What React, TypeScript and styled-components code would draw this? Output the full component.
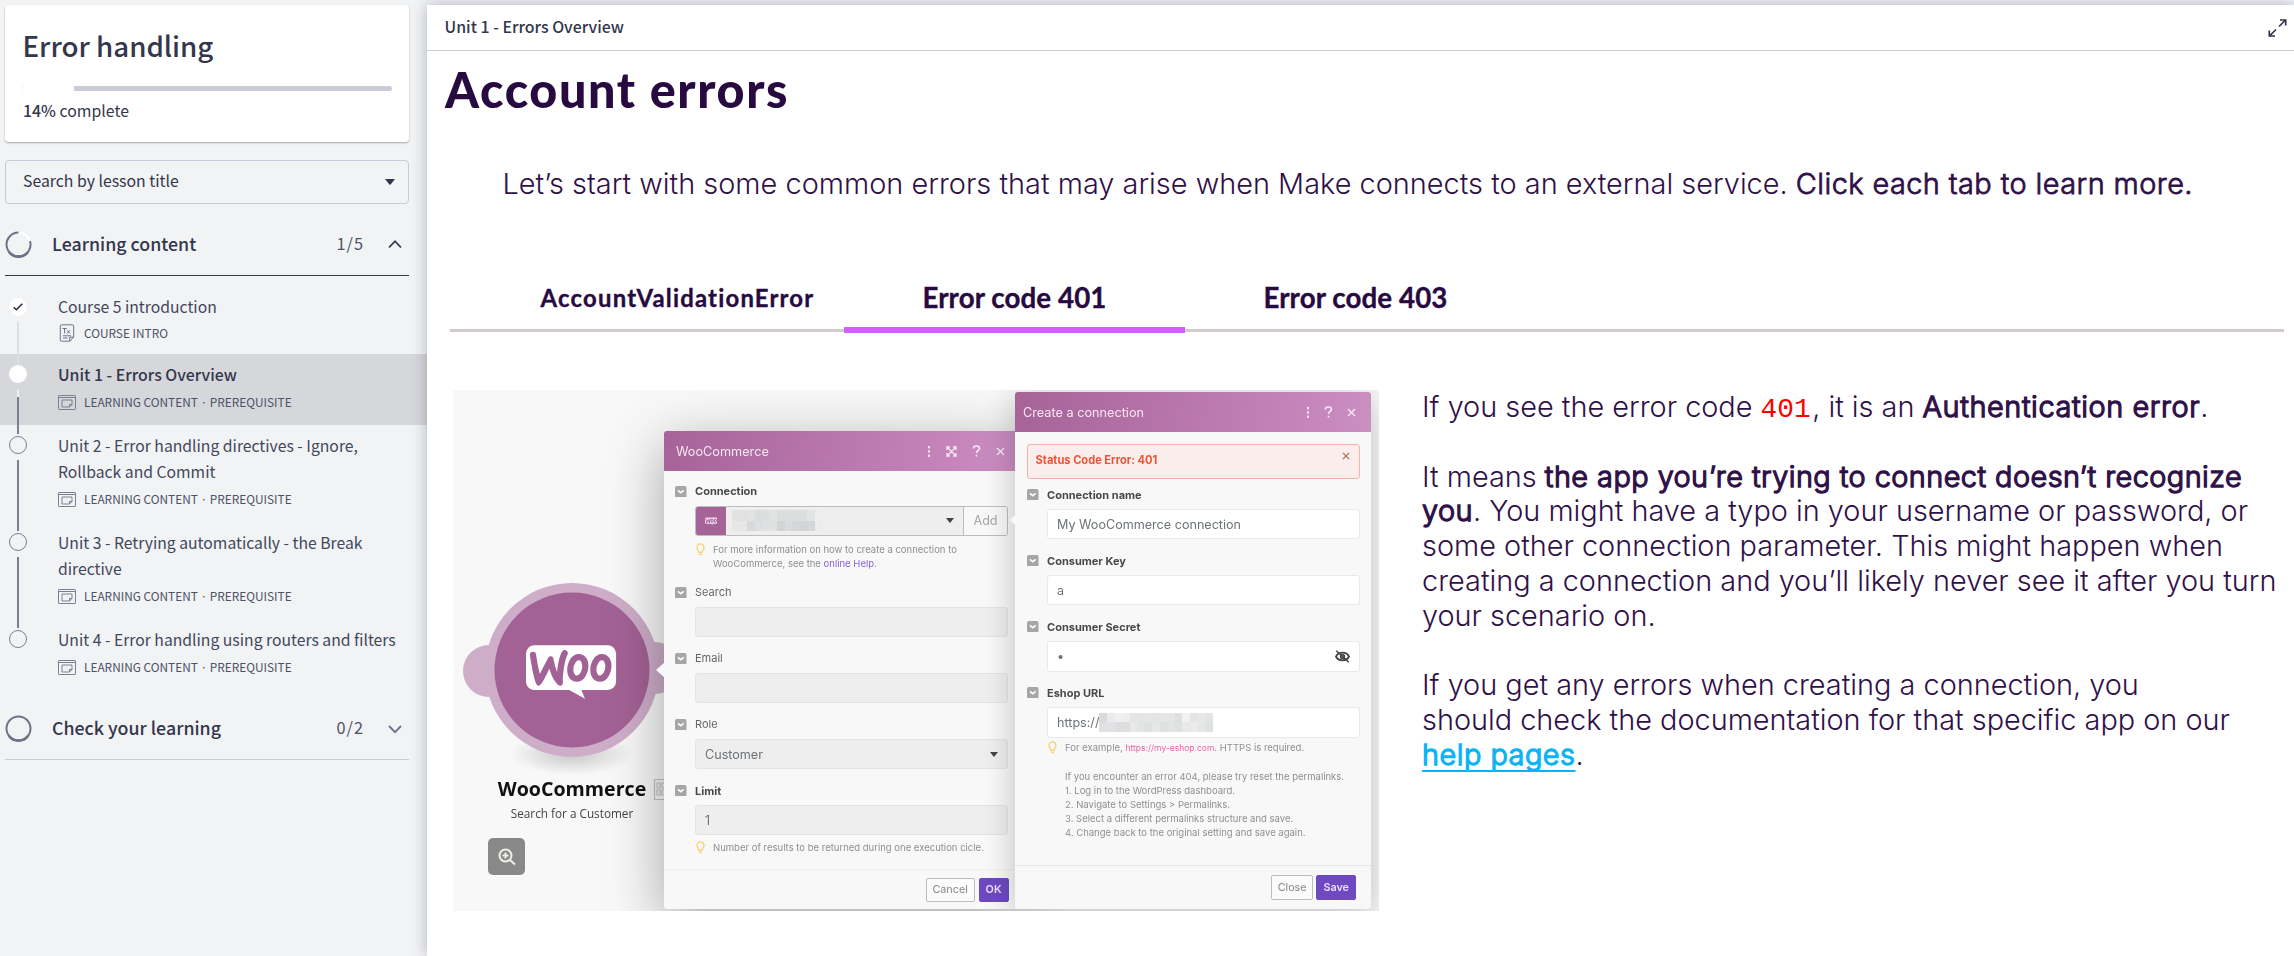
import React from 'react';
import styled, { createGlobalStyle, css } from 'styled-components';
import { SiWoocommerce } from 'react-icons/si';

const uiFont = '"Noto Sans CJK JP", "Noto Sans", sans-serif';
const bodyFont = 'Inter, "Liberation Sans", sans-serif';
const headFont = 'Lato, "Liberation Sans", sans-serif';

const GlobalStyle = createGlobalStyle`
  *, *::before, *::after { box-sizing: border-box; }
  body { margin: 0; background: #f1f3f5; overflow: hidden; }
`;

/* ---------- page ---------- */

const Page = styled.div`
  display: flex;
  width: 2294px;
  height: 956px;
  overflow: hidden;
  font-family: ${uiFont};
  color: #33364c;
`;

const Sidebar = styled.aside`
  width: 427px;
  flex: none;
  padding-top: 5px;
  background: #f1f3f5;
`;

const Main = styled.main`
  flex: 1;
  margin-top: 5px;
  background: #fff;
  box-shadow: 0 0 14px rgba(40, 44, 60, 0.32);
  z-index: 1;
`;

/* ---------- sidebar ---------- */

const ProgressCard = styled.section`
  width: 404px;
  height: 137px;
  margin-left: 5px;
  padding: 22px 17px 0;
  border-radius: 4px;
  background: #fff;
  box-shadow: 0 1px 2px rgba(0, 0, 0, 0.32);
`;

const CourseTitle = styled.h1`
  margin: 0 0 23px 0.5px;
  font-size: 27.7px;
  line-height: 36px;
  font-weight: 500;
`;

const ProgressTrack = styled.div`
  height: 5px;
  border-radius: 3px;
  overflow: hidden;
  background: #c9cbd7;
`;

const ProgressFill = styled.div`
  width: 14%;
  height: 5px;
  background: #fff;
`;

const ProgressText = styled.p`
  margin: 8px 0 0 1px;
  font-size: 15.85px;
  line-height: 24px;

  b {
    font-weight: 500;
  }
`;

const SearchSelect = styled.div`
  display: flex;
  align-items: center;
  justify-content: space-between;
  width: 404px;
  height: 44px;
  margin: 18px 0 0 5px;
  padding: 0 13px 0 17px;
  border: 1px solid #c9cbda;
  border-radius: 4px;
  font-size: 15.8px;
  line-height: 24px;

  span {
    margin-bottom: 3px;
  }
`;

const SectionHeader = styled.div<{ $open?: boolean }>`
  display: flex;
  align-items: center;
  width: 404px;
  height: ${p => (p.$open ? 72 : 70)}px;
  margin-left: 5px;
  padding: ${p => (p.$open ? '10px' : '8px')} 5px 0 0;
  border-bottom: 1px solid ${p => (p.$open ? '#33364c' : '#cbccd2')};

  > svg {
    flex: none;
  }
`;

const SectionTitle = styled.h2`
  flex: 1;
  margin: 0 0 3px 20px;
  font-size: 17.8px;
  line-height: 26px;
  font-weight: 500;
`;

const SectionCount = styled.span`
  margin: 0 22px 3px 0;
  font-size: 16.3px;
  line-height: 26px;
  letter-spacing: 1px;
  color: #4f5266;
`;

const LessonList = styled.ul`
  margin: 10px 0 0;
  padding: 0;
  list-style: none;
`;

const Lesson = styled.li<{ $selected?: boolean }>`
  display: flex;
  padding-left: 8px;
  background: ${p => (p.$selected ? '#d6d7db' : 'transparent')};
`;

const Rail = styled.div<{ $first?: boolean }>`
  position: relative;
  z-index: 1;
  display: flex;
  flex-direction: column;
  align-items: center;
  gap: 6px;
  width: 20px;
  margin-right: 30px;
  padding-top: ${p => (p.$first ? 12 : 11)}px;
`;

const Dot = styled.span<{ $state: 'done' | 'current' | 'todo' }>`
  display: grid;
  place-items: center;
  flex: none;
  width: 18px;
  height: 18px;
  border-radius: 50%;
  ${p =>
    p.$state === 'todo'
      ? css`
          border: 1px solid #7c7f92;
        `
      : css`
          background: #fff;
        `}
`;

const Line = styled.span<{ $state: 'done' | 'current' | 'todo' }>`
  flex: 1;
  width: 1.5px;
  margin-bottom: -9px;
  background: ${p =>
    p.$state === 'done'
      ? '#dedfe3'
      : p.$state === 'current'
        ? 'linear-gradient(#eeeff1 8px, #7c7f92 8px)'
        : '#7c7f92'};
`;

const LessonBody = styled.div<{ $first?: boolean }>`
  padding: ${p => (p.$first ? '8px 0 11.5px' : '8px 0 13px')};
`;

const LessonTitle = styled.div<{ $selected?: boolean }>`
  font-size: ${p => (p.$selected ? 15.85 : 15.73)}px;
  line-height: 26px;
  font-weight: ${p => (p.$selected ? 500 : 400)};
  color: ${p => (p.$selected ? '#33364c' : '#44475b')};
  white-space: nowrap;
`;

const LessonMeta = styled.div<{ $first?: boolean }>`
  display: flex;
  align-items: center;
  height: 20px;
  margin-top: ${p => (p.$first ? 2.5 : 4)}px;
  font-size: 11.85px;
  line-height: 20px;
  color: #4f5266;
  white-space: nowrap;
`;

const MetaIcon = styled.span`
  display: flex;
  justify-content: center;
  width: 18px;
  margin-right: 8px;
`;

/* ---------- lesson header ---------- */

const TopBar = styled.header`
  display: flex;
  align-items: center;
  justify-content: space-between;
  height: 46px;
  padding: 0 7px 0 17.5px;
  border-bottom: 1px solid #c9cbd7;
  font-size: 15.9px;
  line-height: 24px;
  font-weight: 500;

  span {
    margin-bottom: 2px;
  }
`;

const Heading = styled.h2`
  margin: 8px 0 0 18px;
  font-family: ${headFont};
  font-size: 48.5px;
  line-height: 60px;
  font-weight: 900;
  letter-spacing: 1.6px;
  color: #270a40;
`;

const Intro = styled.p`
  margin: 47px 0 0 75.5px;
  font-family: ${bodyFont};
  font-size: 28.92px;
  line-height: 35px;
  font-weight: 300;
  color: #2f1148;
  white-space: nowrap;
`;

const Strong = styled.span<{ $soft?: boolean; $wide?: boolean }>`
  letter-spacing: ${p => (p.$soft ? 0.42 : p.$wide ? 0.6 : 0.45)}px;
  -webkit-text-stroke: ${p => (p.$soft ? 0.8 : 1.3)}px currentColor;
`;

/* ---------- tabs ---------- */

const Tabs = styled.nav`
  display: flex;
  height: 63px;
  margin: 69px 10px 0 23px;
  padding-left: 53px;
  background: linear-gradient(#d3cccd, #d3cccd) 0 59px / 100% 3px no-repeat;
`;

const Tab = styled.div<{ $active?: boolean; $small?: boolean }>`
  width: 341px;
  height: 63px;
  padding: 10px 0 0 ${p => (p.$small ? 8 : 0)}px;
  border-bottom: 6px solid ${p => (p.$active ? '#d35ff7' : 'transparent')};
  font-family: ${headFont};
  font-size: ${p => (p.$small ? 23.9 : 27.7)}px;
  letter-spacing: ${p => (p.$small ? 1.2 : 0.1)}px;
  line-height: 36px;
  font-weight: 700;
  -webkit-text-stroke: 0.35px currentColor;
  text-align: center;
  color: #270a40;
`;

/* ---------- lesson body ---------- */

const Columns = styled.div`
  display: flex;
  padding: 57px 0 0 26px;
`;

const Copy = styled.div`
  margin-left: 43px;
  font-family: ${bodyFont};
  font-size: 28.87px;
  line-height: 34.77px;
  font-weight: 300;
  color: #2f1148;
  white-space: nowrap;

  p {
    margin: 0 0 34.77px;
  }
`;

const Code = styled.code`
  margin-right: 1.5px;
  font: 27.8px/1 'Liberation Mono', monospace;
  color: #f00;
`;

const HelpLink = styled.a`
  color: #0bb4f4;
  letter-spacing: 0.5px;
  -webkit-text-stroke: 1.3px currentColor;
  text-decoration: underline;
  text-decoration-thickness: 2px;
  text-underline-offset: 5px;
  text-decoration-skip-ink: none;
`;

/* ---------- illustration ---------- */

const Canvas = styled.figure`
  position: relative;
  width: 926px;
  height: 521px;
  margin: 0;
  overflow: hidden;
  background: #f8f8f8;
  font-family: ${bodyFont};
  filter: blur(0.6px);
`;

const NodeArt = styled.svg`
  position: absolute;
  left: 0;
  top: 180px;
`;

const NodeLogo = styled(SiWoocommerce)`
  position: absolute;
  left: 73px;
  top: 253px;
  width: 92px;
  height: 58px;
  color: #fff;
`;

const NodeCaption = styled.figcaption`
  position: absolute;
  left: 19px;
  top: 385px;
  width: 200px;
  font-family: 'Open Sans', 'Noto Sans', sans-serif;
  font-size: 11.75px;
  line-height: 20px;
  text-align: center;
  color: #444;

  b {
    display: block;
    font-size: 19.6px;
    line-height: 28px;
    color: #111;
  }
`;

const ZoomButton = styled.button`
  position: absolute;
  left: 35px;
  top: 448px;
  display: grid;
  place-items: center;
  width: 37px;
  height: 37px;
  padding: 0;
  border: 0;
  border-radius: 5px;
  background: #898989;
`;

const Dialog = styled.div<{ $second?: boolean }>`
  position: absolute;
  display: flex;
  flex-direction: column;
  left: ${p => (p.$second ? 562 : 211)}px;
  top: ${p => (p.$second ? 2 : 41)}px;
  width: 356px;
  height: ${p => (p.$second ? 516.5 : 477.5)}px;
  border-radius: 3px;
  background: #f8f8f8;
  box-shadow: ${p => (p.$second ? '0 6px 32px rgba(0,0,0,.24)' : '0 14px 56px rgba(0,0,0,.34)')};
`;

const Pointer = styled.svg<{ $second?: boolean }>`
  position: absolute;
  left: ${p => (p.$second ? 557 : 203)}px;
  top: ${p => (p.$second ? 124 : 272)}px;
`;

const DialogHead = styled.div`
  display: flex;
  align-items: center;
  height: 40px;
  flex: none;
  padding: 0 15px 0 12px;
  border-radius: 3px 3px 0 0;
  background: linear-gradient(100deg, #a56398, #c382b8 75%, #cb8fc2);
  font-size: 12.7px;
  color: #f7e6f4;
`;

const ConnectionHead = styled(DialogHead)`
  padding-left: 8px;
`;

const HeadIcons = styled.div<{ $gap: number }>`
  display: flex;
  align-items: center;
  gap: ${p => p.$gap}px;
  margin-left: auto;
`;

const DialogBody = styled.div<{ $second?: boolean }>`
  flex: 1;
  padding: ${p => (p.$second ? '12px 11px 0 12px' : '12.3px 12px 0 11px')};
`;

const DialogFoot = styled.div<{ $second?: boolean }>`
  display: flex;
  justify-content: flex-end;
  gap: ${p => (p.$second ? 3 : 4)}px;
  height: ${p => (p.$second ? 43.5 : 39.5)}px;
  padding: ${p => (p.$second ? '9px 15px 0 0' : '7.5px 11.5px 0 0')};
  border-top: 1px solid ${p => (p.$second ? '#e6e6e6' : '#f0f0f0')};
`;

const Button = styled.button<{ $primary?: boolean }>`
  height: 24.5px;
  padding: 0 ${p => (p.$primary ? 6 : 5.8)}px;
  border: 1px solid ${p => (p.$primary ? '#6e49bf' : '#b9bec4')};
  border-radius: 2px;
  background: ${p => (p.$primary ? '#6e49bf' : '#fbfbfb')};
  font-family: ${bodyFont};
  font-size: 10.8px;
  font-weight: ${p => (p.$primary ? 600 : 400)};
  color: ${p => (p.$primary ? '#e9e0fb' : '#84898f')};
`;

const Alert = styled.div`
  display: flex;
  justify-content: space-between;
  height: 34.5px;
  margin-bottom: 8px;
  padding: 7px 9px 0 7.5px;
  border: 1px solid #f3b3a8;
  border-radius: 3px;
  background: #f9eeec;
  font-size: 11.1px;
  line-height: 16px;
  font-weight: 700;
  color: #ee5237;
`;

const Field = styled.div`
  margin-bottom: 13.2px;
`;

const Label = styled.div<{ $bold?: boolean }>`
  display: flex;
  align-items: center;
  gap: 8.5px;
  height: 16px;
  margin-bottom: 6.3px;
  font-size: 11px;
  line-height: 16px;
  font-weight: ${p => (p.$bold ? 700 : 400)};
  color: ${p => (p.$bold ? '#484848' : '#666')};
`;

const Input = styled.div<{ $white?: boolean }>`
  display: flex;
  align-items: center;
  height: 30.6px;
  margin-left: 20px;
  padding: 0 9px;
  border: 1px solid ${p => (p.$white ? '#e9e9e9' : '#e4e4e4')};
  border-radius: 3px;
  background: ${p => (p.$white ? '#fff' : '#eee')};
  font-size: 12.6px;
  color: #6d7276;

  > svg {
    margin-left: auto;
  }
`;

const Connection = styled(Input)`
  padding: 0;
  border-color: #b9bec0;
  overflow: hidden;
`;

const WooBadge = styled.span`
  display: grid;
  place-items: center;
  width: 30px;
  height: 30px;
  background: #a56398;
  color: #f0dcec;
`;

const SelectPart = styled.span`
  display: flex;
  align-items: center;
  justify-content: space-between;
  flex: 1;
  padding: 0 9px 0 6px;
`;

const AddPart = styled.span`
  display: grid;
  place-items: center;
  width: 44px;
  height: 30px;
  border-left: 1px solid #b9bec0;
  background: #f8f8f8;
  color: #a3a7aa;
`;

const Hint = styled.div<{ $gap: number }>`
  display: flex;
  gap: 8px;
  margin: ${p => p.$gap}px 0 0 21px;
  font-size: 9.5px;
  line-height: 14.2px;
  color: #8f8f8f;
  white-space: nowrap;

  svg {
    flex: none;
  }
`;

const HintLink = styled.span<{ $pink?: boolean }>`
  color: ${p => (p.$pink ? '#ee5fa8' : '#8763d6')};
  font-size: ${p => (p.$pink ? 8.5 : 9.5)}px;
`;

const Mosaic = styled.span<{ $cols: number; $h: number }>`
  display: grid;
  grid-template-columns: repeat(${p => p.$cols}, 7.55px);
  grid-auto-rows: ${p => p.$h}px;
`;

const Cell = styled.i<{ $c: string }>`
  background: #${p => p.$c};
`;

/* ---------- icons ---------- */

const Ring = ({ partial }: { partial?: boolean }) => (
  <svg width="27" height="27" viewBox="0 0 27 27" fill="none">
    <circle cx="13.5" cy="13.5" r="12" stroke={partial ? '#fff' : '#6f7286'} strokeWidth="2" />
    {partial && <path d="M13.5 1.5A12 12 0 1 0 25 10" stroke="#6f7286" strokeWidth="2" />}
    <path d="M4 21A12 12 0 0 0 23 21" stroke="#6f7286" strokeWidth="2.6" />
  </svg>
);

const Chevron = ({ up }: { up?: boolean }) => (
  <svg width="18" height="18" viewBox="0 0 18 18" fill="none" stroke={up ? '#33364c' : '#6f7286'} strokeWidth="1.8">
    <path d={up ? 'M3 11.5 9 5.2l6 6.3' : 'M3 6l6 6.2L15 6'} />
  </svg>
);

const Caret = ({ w = 10, h = 6, color = '#33364c' }) => (
  <svg width={w} height={h} viewBox="0 0 10 6">
    <path d="M0 0h10L5.6 5.6a.9.9 0 0 1-1.2 0z" fill={color} />
  </svg>
);

const DocIcon = () => (
  <svg width="16" height="18" viewBox="0 0 16 18" fill="none" stroke="#6f7286" strokeWidth="1">
    <path d="M2.5.8h11a1.2 1.2 0 0 1 1.2 1.2v11l-4 4.2H2.5A1.2 1.2 0 0 1 1.3 16V2A1.2 1.2 0 0 1 2.5.8z" />
    <path d="M10.7 17v-3.800h4M3.500 4.500h4.200M5.600 4.500v5M8 6.200l3 3.300M11 6.200 8 9.500M4 11.800h8M4 14h4.500" />
  </svg>
);

const WindowIcon = () => (
  <svg width="18" height="15" viewBox="0 0 18 15" fill="none" stroke="#7c7f92" strokeWidth="1">
    <rect x=".5" y=".5" width="17" height="14" rx=".6" />
    <path d="M.5 2.500h17M14 9.500V5H4v7h7.500M11.500 12V9.500H14z" />
  </svg>
);

const ExpandIcon = () => (
  <svg width="19" height="18" viewBox="0 0 19 18" fill="none" stroke="#33364c" strokeWidth="1.7">
    <path d="M11 7.500 17 1.500M12 1h5.700v5.600M8 10.500 2 16.500M7 17H1.300v-5.600" />
  </svg>
);

const Marker = () => (
  <svg width="11.5" height="11.5" viewBox="0 0 12 12">
    <rect width="12" height="12" rx="1.8" fill="#a6a6a6" />
    <path d="M3 4.500 6 7l3-2.500" fill="none" stroke="#fff" strokeWidth="1.6" />
  </svg>
);

const Bulb = () => (
  <svg width="9" height="13" viewBox="0 0 9 13" fill="none" stroke="#fbcf6b" strokeWidth="1.300">
    <path d="M3 9.500C3 7.500 1 6.800 1 4.400a3.500 3.500 0 0 1 7 0C8 6.800 6 7.500 6 9.500zM3.200 11.700h2.600" />
  </svg>
);

const MoreDots = () => (
  <svg width="4" height="11" viewBox="0 0 4 11" fill="#f7e6f4">
    <rect x="1" y="0" width="2" height="2.300" />
    <rect x="1" y="4.300" width="2" height="2.300" />
    <rect x="1" y="8.600" width="2" height="2.300" />
  </svg>
);

const Arrows = () => (
  <svg width="11" height="11" viewBox="0 0 11 11" fill="none" stroke="#f7e6f4" strokeWidth="1.400">
    <path d="M1 4V1h3M7 1h3v3M10 7v3H7M4 10H1V7M1 1l9 9M10 1l-9 9" />
  </svg>
);

const Question = () => (
  <svg width="9" height="12" viewBox="0 0 9 12" fill="none" stroke="#f7e6f4" strokeWidth="1.600">
    <path d="M1.300 3.600C1.300 0 7.500.2 7.500 3.400c0 2-3 2.100-3 4.600M4.500 9.700v1.900" />
  </svg>
);

const Cross = ({ size = 9, color = '#f7e6f4' }) => (
  <svg width={size} height={size} viewBox="0 0 9 9" stroke={color} strokeWidth="1.400">
    <path d="M1 1l7 7M8 1 1 8" />
  </svg>
);

const EyeOff = () => (
  <svg width="15" height="13" viewBox="0 0 15 13" fill="none" stroke="#444" strokeWidth="1.800">
    <path d="M1 6.500C3.500 1.300 11.500 1.300 14 6.500 11.500 11.600 3.500 11.600 1 6.500z" />
    <circle cx="7.500" cy="6.500" r="1.800" />
    <path d="M1.200.8 13.800 12.200" strokeWidth="1.500" />
  </svg>
);

/* The bubble alone sits in the left third of the full wordmark. */
const bubbleBox = '0 9.4 8.3 5.2';

/* ---------- data ---------- */

type State = 'done' | 'current' | 'todo';

const lessons: { title: string[]; meta: string; state: State }[] = [
  { title: ['Course 5 introduction'], meta: 'COURSE INTRO', state: 'done' },
  { title: ['Unit 1 - Errors Overview'], meta: 'LEARNING CONTENT · PREREQUISITE', state: 'current' },
  {
    title: ['Unit 2 - Error handling directives - Ignore,', 'Rollback and Commit'],
    meta: 'LEARNING CONTENT · PREREQUISITE',
    state: 'todo',
  },
  {
    title: ['Unit 3 - Retrying automatically - the Break', 'directive'],
    meta: 'LEARNING CONTENT · PREREQUISITE',
    state: 'todo',
  },
  {
    title: ['Unit 4 - Error handling using routers and filters'],
    meta: 'LEARNING CONTENT · PREREQUISITE',
    state: 'todo',
  },
];

const accountMosaic =
  'e2e2e2 e0e1e1 e2e3e3 dcddde dddede e1e2e2 dbdcdd dddede dcdddd dddedf e2e3e3 ededed e7e7e7 e7e7e7 d8d9da dddedf dfe0e1 e0e1e1 d3d4d5 dadbdc d6d7d8 d3d4d6 d5d6d7 ebebeb'.split(' ');
const urlMosaic =
  'd9dadb ebebec f0f0f0 eeeeef e4e5e6 e3e4e5 e6e6e7 e4e5e5 e6e7e8 e5e5e6 dedfe0 f1f1f1 e3e4e5 e6e7e8 e3e4e5 e0e1e2 e1e2e3 dcddde dddedf e9e9ea e3e4e4 dfe0e1 e6e7e7 dfe0e1 e2e3e3 dfe0e1 e8e9e9 ebebeb e5e6e6 dfe0e1'.split(' ');

const LessonRow = ({ lesson, first, last }: { lesson: (typeof lessons)[number]; first: boolean; last: boolean }) => {
  const selected = lesson.state === 'current';
  return (
    <Lesson $selected={selected}>
      <Rail $first={first}>
        <Dot $state={lesson.state}>
          {lesson.state === 'done' && (
            <svg width="10" height="8" viewBox="0 0 10 8" fill="none" stroke="#22242f" strokeWidth="1.500">
              <path d="M.7 4.200 3.300 6.700 9.300.8" />
            </svg>
          )}
        </Dot>
        {!last && <Line $state={lesson.state} />}
      </Rail>
      <LessonBody $first={first}>
        {lesson.title.map(t => (
          <LessonTitle key={t} $selected={selected}>
            {t}
          </LessonTitle>
        ))}
        <LessonMeta $first={first}>
          <MetaIcon>{first ? <DocIcon /> : <WindowIcon />}</MetaIcon>
          {lesson.meta}
        </LessonMeta>
      </LessonBody>
    </Lesson>
  );
};

const FieldLabel = ({ text, bold }: { text: string; bold?: boolean }) => (
  <Label $bold={bold}>
    <Marker />
    {text}
  </Label>
);

const Illustration = () => (
  <Canvas>
    <NodeArt width="240" height="240" viewBox="0 180 240 240">
      <defs>
        <radialGradient id="floor">
          <stop offset="0" stopColor="#000" stopOpacity=".2" />
          <stop offset="1" stopColor="#000" stopOpacity="0" />
        </radialGradient>
      </defs>
      <ellipse cx="119" cy="364" rx="62" ry="21" fill="url(#floor)" />
      <g fill="#ceadc9">
        <circle cx="36" cy="281" r="26" />
        <circle cx="202" cy="278" r="26" />
        <circle cx="119" cy="280" r="87" />
      </g>
      <circle cx="119" cy="280" r="77.500" fill="#a36295" />
      <g fill="none" stroke="#c4c4c4" strokeWidth="1.200">
        <path d="M215 389.500h-13.500v20H215" />
        <path d="M204 393h3v5h-3zM204 400h3v5h-3zM209 393h3v5h-3zM209 400h3v5h-3z" />
      </g>
    </NodeArt>
    <NodeLogo viewBox={bubbleBox} />
    <NodeCaption>
      <b>WooCommerce</b>
      Search for a Customer
    </NodeCaption>
    <ZoomButton aria-label="Zoom">
      <svg width="18" height="18" viewBox="0 0 18 18" fill="none" stroke="#eef0e6" strokeWidth="2">
        <circle cx="7.500" cy="7.500" r="6" />
        <path d="M12 12l5 4.600M4.500 7.500h6M7.500 4.500v6" />
      </svg>
    </ZoomButton>

    <Dialog>
      <DialogHead>
        WooCommerce
        <HeadIcons $gap={15}>
          <MoreDots />
          <Arrows />
          <Question />
          <Cross />
        </HeadIcons>
      </DialogHead>
      <DialogBody>
        <Field>
          <FieldLabel text="Connection" bold />
          <Connection>
            <WooBadge>
              <SiWoocommerce width={18} height={12} viewBox={bubbleBox} />
            </WooBadge>
            <SelectPart>
              <Mosaic $cols={12} $h={10.5}>
                {accountMosaic.map((c, i) => (
                  <Cell key={i} $c={c} />
                ))}
              </Mosaic>
              <Caret w={8} h={5} color="#444" />
            </SelectPart>
            <AddPart>Add</AddPart>
          </Connection>
          <Hint $gap={6.5}>
            <Bulb />
            <span>
              For more information on how to create a connection to
              <br />
              WooCommerce, see the <HintLink>online Help</HintLink>.
            </span>
          </Hint>
        </Field>
        <Field>
          <FieldLabel text="Search" />
          <Input />
        </Field>
        <Field>
          <FieldLabel text="Email" />
          <Input />
        </Field>
        <Field>
          <FieldLabel text="Role" />
          <Input>
            Customer
            <Caret w={8} h={5} color="#444" />
          </Input>
        </Field>
        <Field>
          <FieldLabel text="Limit" bold />
          <Input>1</Input>
          <Hint $gap={6}>
            <Bulb />
            Number of results to be returned during one execution cicle.
          </Hint>
        </Field>
      </DialogBody>
      <DialogFoot>
        <Button>Cancel</Button>
        <Button $primary>OK</Button>
      </DialogFoot>
    </Dialog>
    <Pointer width="9" height="16" viewBox="0 0 9 16">
      <path d="M9 0v16L0 8z" fill="#f8f8f8" />
    </Pointer>

    <Dialog $second>
      <ConnectionHead>
        Create a connection
        <HeadIcons $gap={14}>
          <MoreDots />
          <Question />
          <Cross />
        </HeadIcons>
      </ConnectionHead>
      <DialogBody $second>
        <Alert>
          Status Code Error: 401
          <Cross size={8} color="#b06a5c" />
        </Alert>
        <Field>
          <FieldLabel text="Connection name" bold />
          <Input $white>My WooCommerce connection</Input>
        </Field>
        <Field>
          <FieldLabel text="Consumer Key" bold />
          <Input $white>a</Input>
        </Field>
        <Field>
          <FieldLabel text="Consumer Secret" bold />
          <Input $white>
            •
            <EyeOff />
          </Input>
        </Field>
        <Field>
          <FieldLabel text="Eshop URL" bold />
          <Input $white>
            https://
            <Mosaic $cols={15} $h={9.5}>
              {urlMosaic.map((c, i) => (
                <Cell key={i} $c={c} />
              ))}
            </Mosaic>
          </Input>
          <Hint $gap={3.5}>
            <Bulb />
            <span>
              For example, <HintLink $pink>https://my-eshop.com</HintLink>. HTTPS is required.
              <br />
              <br />
              If you encounter an error 404, please try reset the permalinks.
              <br />
              1. Log in to the WordPress dashboard.
              <br />
              2. Navigate to Settings &gt; Permalinks.
              <br />
              3. Select a different permalinks structure and save.
              <br />
              4. Change back to the original setting and save again.
            </span>
          </Hint>
        </Field>
      </DialogBody>
      <DialogFoot $second>
        <Button>Close</Button>
        <Button $primary>Save</Button>
      </DialogFoot>
    </Dialog>
    <Pointer $second width="6" height="12" viewBox="0 0 6 12">
      <path d="M6 0v12L0 6z" fill="#f8f8f8" />
    </Pointer>
  </Canvas>
);

export default function App() {
  return (
    <Page>
      <GlobalStyle />
      <Sidebar>
        <ProgressCard>
          <CourseTitle>Error handling</CourseTitle>
          <ProgressTrack>
            <ProgressFill />
          </ProgressTrack>
          <ProgressText>
            <b>14%</b> complete
          </ProgressText>
        </ProgressCard>
        <SearchSelect>
          <span>Search by lesson title</span>
          <Caret />
        </SearchSelect>
        <SectionHeader $open>
          <Ring partial />
          <SectionTitle>Learning content</SectionTitle>
          <SectionCount>1/5</SectionCount>
          <Chevron up />
        </SectionHeader>
        <LessonList>
          {lessons.map((lesson, i) => (
            <LessonRow key={i} lesson={lesson} first={i === 0} last={i === lessons.length - 1} />
          ))}
        </LessonList>
        <SectionHeader>
          <Ring />
          <SectionTitle>Check your learning</SectionTitle>
          <SectionCount>0/2</SectionCount>
          <Chevron />
        </SectionHeader>
      </Sidebar>
      <Main>
        <TopBar>
          <span>Unit 1 - Errors Overview</span>
          <ExpandIcon />
        </TopBar>
        <Heading>Account errors</Heading>
        <Intro>
          Let’s start with some common errors that may arise when Make connects to an external service.{' '}
          <Strong $soft>Click each tab to learn more.</Strong>
        </Intro>
        <Tabs>
          <Tab $small>AccountValidationError</Tab>
          <Tab $active>Error code 401</Tab>
          <Tab>Error code 403</Tab>
        </Tabs>
        <Columns>
          <Illustration />
          <Copy>
            <p>
              If you see the error code <Code>401</Code>, it is an <Strong $wide>Authentication error</Strong>.
            </p>
            <p>
              It means <Strong>the app you’re trying to connect doesn’t recognize</Strong>
              <br />
              <Strong>you</Strong>. You might have a typo in your username or password, or
              <br />
              some other connection parameter. This might happen when
              <br />
              creating a connection and you’ll likely never see it after you turn
              <br />
              your scenario on.
            </p>
            <p>
              If you get any errors when creating a connection, you
              <br />
              should check the documentation for that specific app on our
              <br />
              <HelpLink>help pages</HelpLink>.
            </p>
          </Copy>
        </Columns>
      </Main>
    </Page>
  );
}
